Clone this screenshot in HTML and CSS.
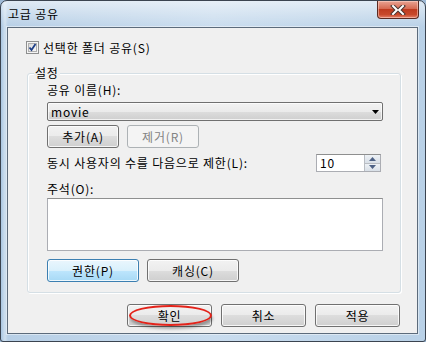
FILE: index.html
```html
<!DOCTYPE html>
<html>
  <head>
    <title>고급 공유</title>
    <link rel="stylesheet" href="styles.css">
  </head>
  <body>
    <div class="window">
      <div class="titlebar">
        <span class="title">고급 공유</span>
        <button class="close" type="button">
          <svg width="16" height="10" viewBox="0 0 16 10">
            <path d="M3 1 L7 5 L3 9 M13 1 L9 5 L13 9" stroke="#4a3530" stroke-width="4" fill="none" stroke-linecap="square"/>
            <path d="M3 1 L7 5 L3 9 M13 1 L9 5 L13 9" stroke="#ffffff" stroke-width="2" fill="none" stroke-linecap="square"/>
          </svg>
        </button>
      </div>

      <div class="client">
        <label class="check-row">
          <span class="checkbox">
            <svg width="13" height="13" viewBox="0 0 13 13">
              <defs>
                <linearGradient id="cb" x1="0" y1="0" x2="1" y2="1">
                  <stop offset="0" stop-color="#d8d8d8"/>
                  <stop offset="1" stop-color="#fbfbfb"/>
                </linearGradient>
              </defs>
              <rect x="0.5" y="0.5" width="12" height="12" fill="#f4f4f4" stroke="#8e8f8f"/>
              <rect x="2.5" y="2.5" width="8" height="8" fill="url(#cb)" stroke="#b0b0b0" stroke-width="1"/>
              <path d="M3.5 6.5 L5.5 9 L9.5 3" stroke="#1e3f87" stroke-width="1.8" fill="none"/>
            </svg>
          </span>
          선택한 폴더 공유(S)
        </label>

        <div class="group">
          <div class="group-title">설정</div>

          <div class="field-label">공유 이름(H):</div>
          <div class="combo">
            <span>movie</span>
            <svg width="7" height="4" viewBox="0 0 7 4"><path d="M0 0 H7 L3.5 4 Z" fill="#000"/></svg>
          </div>

          <div class="btn-row">
            <button class="btn small" type="button">추가(A)</button>
            <button class="btn small disabled" type="button">제거(R)</button>
          </div>

          <div class="limit-row">
            <span>동시 사용자의 수를 다음으로 제한(L):</span>
            <div class="spin">
              <span class="spin-value">10</span>
              <div class="spin-btns">
                <span class="spin-up"><svg width="7" height="4" viewBox="0 0 7 4"><path d="M0 4 H7 L3.5 0 Z" fill="#4d6185"/></svg></span>
                <span class="spin-down"><svg width="7" height="4" viewBox="0 0 7 4"><path d="M0 0 H7 L3.5 4 Z" fill="#4d6185"/></svg></span>
              </div>
            </div>
          </div>

          <div class="field-label comment-label">주석(O):</div>
          <div class="textarea"></div>

          <div class="btn-row bottom-row">
            <button class="btn wide focused" type="button">권한(P)</button>
            <button class="btn wide" type="button">캐싱(C)</button>
          </div>
        </div>

        <div class="dialog-buttons">
          <button class="btn dialog marked" type="button">확인<span class="mark"></span></button>
          <button class="btn dialog" type="button">취소</button>
          <button class="btn dialog" type="button">적용</button>
        </div>
      </div>
    </div>
  </body>
</html>
```

FILE: styles.css
```css
body {
  margin: 0;
  padding: 0;
  font-family: "Noto Sans CJK KR", "Liberation Sans", sans-serif;
  font-size: 12px;
  letter-spacing: 0.8px;
  color: #000;
  background: #9fbad6;
}

.window {
  width: 424px;
  height: 340px;
  border: 1px solid #3b4450;
  border-radius: 7px 7px 3px 3px;
  display: flex;
  flex-direction: column;
  background:
    linear-gradient(to bottom, rgba(255, 255, 255, 0.55), rgba(255, 255, 255, 0) 26px),
    linear-gradient(to right, #a9c6e2, #cfe0ef 4px, #b7cfe6 7px, #c9dcee 50%, #b9d1e7 100%);
  overflow: hidden;
}

.titlebar {
  height: 26px;
  display: flex;
  align-items: flex-start;
}

.title {
  margin: 6px 0 0 7px;
  line-height: 14px;
}

.close {
  margin-left: auto;
  margin-right: 6px;
  width: 42px;
  height: 18px;
  padding: 0;
  border: 1px solid #5a2a22;
  border-top: none;
  border-radius: 0 0 4px 4px;
  background: linear-gradient(to bottom, #e9a493 0%, #d66a52 45%, #bf3b1f 50%, #c8492b 80%, #e6826a 100%);
  box-shadow: inset 0 0 0 1px rgba(255, 220, 210, 0.5);
  display: flex;
  align-items: center;
  justify-content: center;
}

.client {
  margin: 0 7px 7px 6px;
  flex: 1;
  border: 1px solid #5c6b7b;
  background: #f0f0f0;
  padding: 13px 16px 0 18px;
  box-shadow: 0 0 0 1px rgba(255, 255, 255, 0.45);
}

.check-row {
  display: flex;
  align-items: center;
  height: 13px;
  line-height: 14px;
}

.checkbox {
  width: 13px;
  height: 13px;
  margin-right: 4px;
  display: flex;
}

.group {
  margin: 19px 0 0 1px;
  border: 1px solid #d5dfe5;
  border-radius: 3px;
  padding: 0 17px 10px 19px;
  box-shadow: inset 1px 1px 0 #ffffff, 1px 1px 0 #ffffff;
}

.group-title {
  width: fit-content;
  margin: -8px 0 0 -13px;
  padding: 0 1px;
  line-height: 14px;
  background: #f0f0f0;
}

.field-label {
  margin-top: 3px;
  line-height: 14px;
}

.combo {
  margin-top: 5px;
  height: 17px;
  border: 1px solid #707070;
  border-radius: 2px;
  background: linear-gradient(to bottom, #f2f2f2 0%, #ebebeb 50%, #dddddd 50%, #cfcfcf 100%);
  box-shadow: inset 0 0 0 1px rgba(255, 255, 255, 0.7);
  display: flex;
  align-items: center;
  padding: 0 3px 0 3px;
  line-height: 14px;
}

.combo svg {
  margin-left: auto;
}

.btn-row {
  margin-top: 4px;
  display: flex;
  gap: 8px;
}

.btn {
  height: 23px;
  padding: 0;
  border: 1px solid #707070;
  border-radius: 3px;
  background: linear-gradient(to bottom, #f2f2f2 0%, #ebebeb 50%, #dddddd 50%, #cfcfcf 100%);
  box-shadow: inset 0 0 0 1px rgba(255, 255, 255, 0.8);
  font-family: inherit;
  font-size: 12px;
  letter-spacing: 0.8px;
  line-height: 14px;
  color: #000;
}

.btn.small {
  width: 72px;
}

.btn.wide {
  width: 92px;
}

.btn.disabled {
  border-color: #adb2b5;
  background: #f4f4f4;
  box-shadow: none;
  color: #838383;
}

.btn.focused {
  border-color: #3c7fb1;
  background: linear-gradient(to bottom, #eaf6fd 0%, #d9f0fc 50%, #bee6fd 50%, #a7d9f5 100%);
}

.limit-row {
  margin-top: 6px;
  display: flex;
  align-items: center;
  justify-content: space-between;
  padding-right: 2px;
  line-height: 14px;
}

.spin {
  width: 63px;
  height: 16px;
  border: 1px solid #abadb3;
  border-top-color: #8e8f8f;
  background: #fff;
  display: flex;
}

.spin-value {
  padding-left: 3px;
  line-height: 16px;
}

.spin-btns {
  margin-left: auto;
  width: 15px;
  display: flex;
  flex-direction: column;
  border-left: 1px solid #b9bdc3;
}

.spin-btns span {
  flex: 1;
  display: flex;
  align-items: center;
  justify-content: center;
  background: linear-gradient(to bottom, #eef2f6, #d8dfe7);
}

.spin-up {
  border-bottom: 1px solid #b9bdc3;
}

.comment-label {
  margin-top: 10px;
}

.textarea {
  margin-top: 2px;
  height: 51px;
  border: 1px solid #abadb3;
  border-top-color: #8e8f8f;
  background: #fff;
}

.bottom-row {
  margin-top: 8px;
}

.dialog-buttons {
  margin-top: 11px;
  display: flex;
  justify-content: flex-end;
  gap: 9px;
  padding-right: 1px;
}

.btn.dialog {
  width: 85px;
}

.marked {
  position: relative;
}

.mark {
  position: absolute;
  left: 1px;
  top: 0px;
  width: 79px;
  height: 17px;
  border: 2px solid #e3231a;
  border-radius: 50%;
  box-shadow: 1px 3px 3px rgba(0, 0, 0, 0.3);
}
```
